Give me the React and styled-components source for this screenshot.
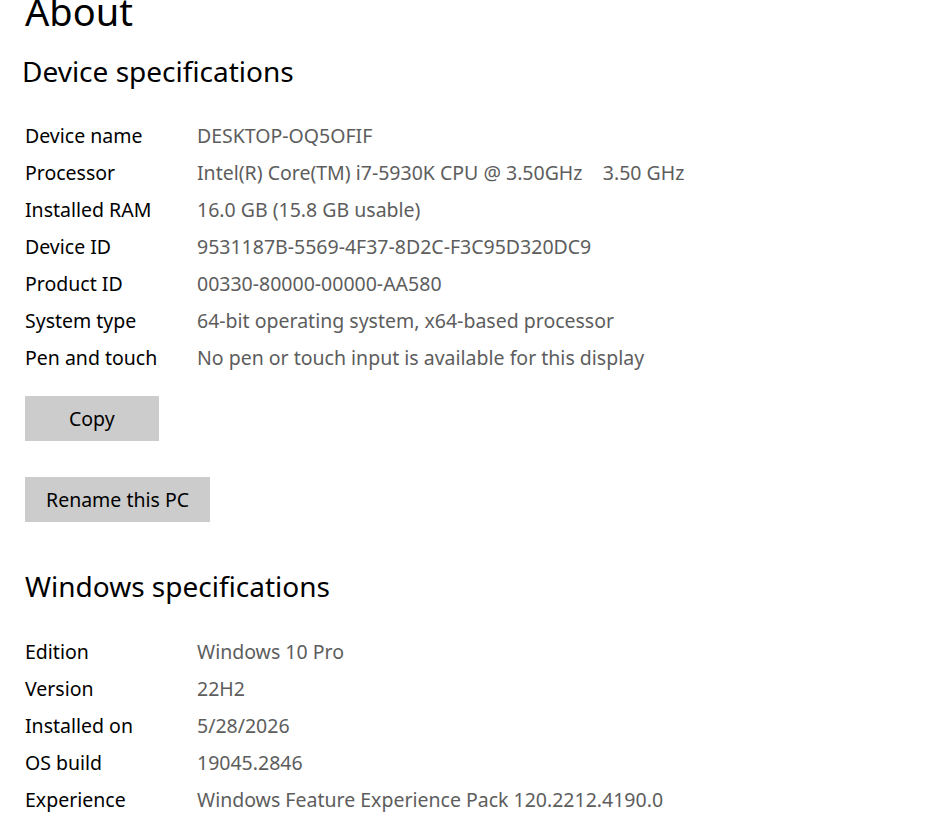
import React from 'react';
import styled, { createGlobalStyle } from 'styled-components';

const GlobalStyle = createGlobalStyle`
  html, body {
    margin: 0;
    padding: 0;
    background: #ffffff;
  }
  body {
    font-family: "Noto Sans", "Open Sans", sans-serif;
    color: #000;
  }
`;

const Page = styled.div`
  display: flex;
  flex-direction: column;
  align-items: flex-start;
  padding: 0 0 0 25px;
  width: 943px;
  height: 828px;
  box-sizing: border-box;
  overflow: hidden;
`;

const PageTitle = styled.h1`
  margin: -13px 0 0 0;
  font-size: 38px;
  font-weight: 400;
  line-height: 48px;
`;

const SectionTitle = styled.h2`
  margin: ${(p) => p.$top}px 0 0 ${(p) => p.$shift || 0}px;
  font-size: 28px;
  font-weight: 400;
  line-height: 36px;
`;

const SpecTable = styled.dl`
  display: grid;
  grid-template-columns: 172px auto;
  grid-auto-rows: 37px;
  margin: ${(p) => p.$top}px 0 0 0;
  font-size: 19.5px;
  line-height: 37px;
`;

const Label = styled.dt`
  margin: 0;
  color: #000;
`;

const Value = styled.dd`
  margin: 0;
  color: #5d5d5d;
  white-space: pre;
`;

const Button = styled.button`
  margin-top: ${(p) => p.$top}px;
  height: 45px;
  padding: 0 ${(p) => p.$pad}px;
  border: none;
  background: #cccccc;
  color: #000;
  font-family: "Noto Sans", "Open Sans", sans-serif;
  font-size: 19.5px;
  cursor: pointer;
`;

const deviceSpecs = [
  ['Device name', 'DESKTOP-OQ5OFIF'],
  ['Processor', 'Intel(R) Core(TM) i7-5930K CPU @ 3.50GHz    3.50 GHz'],
  ['Installed RAM', '16.0 GB (15.8 GB usable)'],
  ['Device ID', '9531187B-5569-4F37-8D2C-F3C95D320DC9'],
  ['Product ID', '00330-80000-00000-AA580'],
  ['System type', '64-bit operating system, x64-based processor'],
  ['Pen and touch', 'No pen or touch input is available for this display'],
];

const windowsSpecs = [
  ['Edition', 'Windows 10 Pro'],
  ['Version', '22H2'],
  ['Installed on', '5/28/2026'],
  ['OS build', '19045.2846'],
  ['Experience', 'Windows Feature Experience Pack 120.2212.4190.0'],
];

const Specs = ({ rows, top }) => (
  <SpecTable $top={top}>
    {rows.map(([label, value]) => (
      <React.Fragment key={label}>
        <Label>{label}</Label>
        <Value>{value}</Value>
      </React.Fragment>
    ))}
  </SpecTable>
);

export default function App() {
  return (
    <>
      <GlobalStyle />
      <Page>
        <PageTitle>About</PageTitle>
        <SectionTitle $top={18} $shift={-3}>Device specifications</SectionTitle>
        <Specs rows={deviceSpecs} top={28} />
        <Button $top={20} $pad={44}>Copy</Button>
        <Button $top={36} $pad={21}>Rename this PC</Button>
        <SectionTitle $top={46}>Windows specifications</SectionTitle>
        <Specs rows={windowsSpecs} top={29} />
      </Page>
    </>
  );
}
